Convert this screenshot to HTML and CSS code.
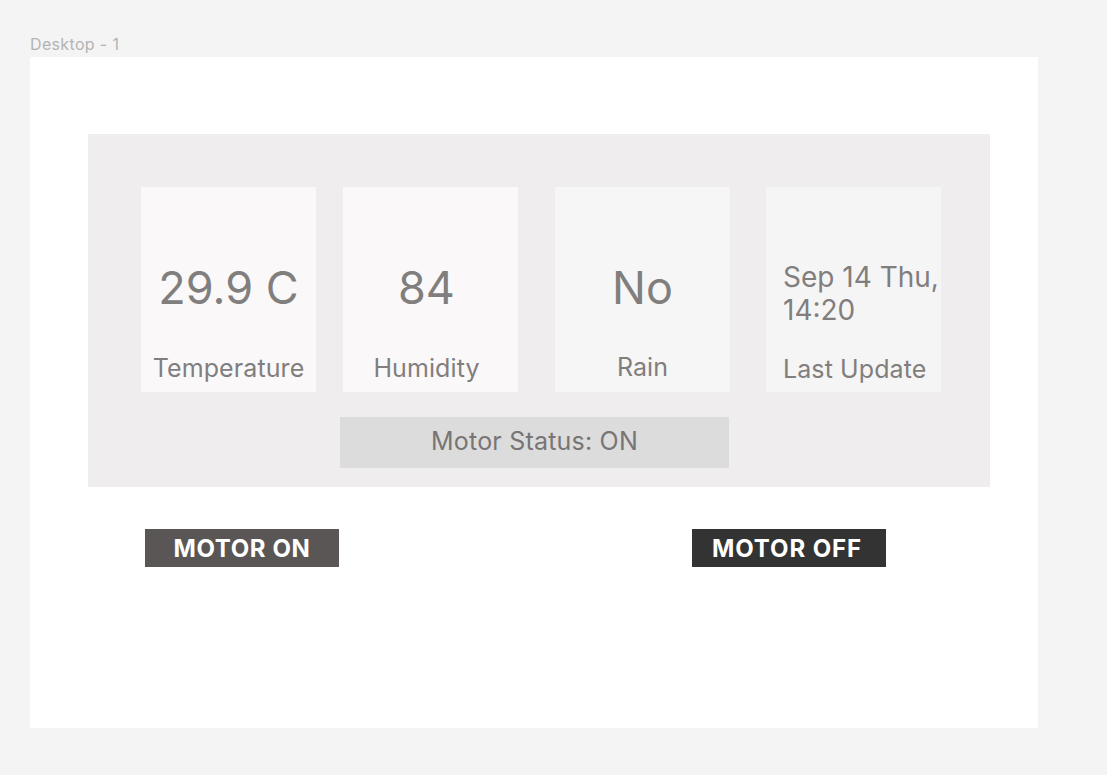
FILE: index.html
```html
<!DOCTYPE html>
<html>
<head>
<meta charset="utf-8">
<link rel="stylesheet" href="styles.css">
</head>
<body>
<div class="label">Desktop - 1</div>
<div class="frame">
  <div class="panel">
    <div class="cards">
      <div class="card c1">
        <div class="value">29.9 C</div>
        <div class="name">Temperature</div>
      </div>
      <div class="card c2">
        <div class="value">84</div>
        <div class="name">Humidity</div>
      </div>
      <div class="card c3">
        <div class="value">No</div>
        <div class="name">Rain</div>
      </div>
      <div class="card c4">
        <div class="value date">Sep 14 Thu,<br>14:20</div>
        <div class="name">Last Update</div>
      </div>
    </div>
    <div class="status">Motor Status: ON</div>
  </div>
  <div class="buttons">
    <button class="btn on">MOTOR ON</button>
    <button class="btn off">MOTOR OFF</button>
  </div>
</div>
</body>
</html>
```
FILE: styles.css
```css
html, body {
  margin: 0;
  padding: 0;
}
body {
  background: #f4f4f4;
  font-family: Inter, "Noto Sans", sans-serif;
  width: 1107px;
  height: 775px;
  overflow: hidden;
}
.label {
  padding: 35px 0 0 30px;
  box-sizing: border-box;
  height: 57px;
  font-size: 16px;
  line-height: 19px;
  letter-spacing: 0.35px;
  color: #b3b3b3;
}
.frame {
  margin-left: 30px;
  width: 1008px;
  height: 671px;
  background: #ffffff;
  padding-top: 77px;
  box-sizing: border-box;
}
.panel {
  margin-left: 58px;
  width: 902px;
  height: 353px;
  background: #efeded;
  padding-top: 53px;
  box-sizing: border-box;
}
.cards {
  display: flex;
  padding-left: 53px;
}
.card {
  width: 175px;
  height: 205px;
  background: #faf8f9;
  text-align: center;
  color: #817e7e;
  box-sizing: border-box;
}
.c2 { margin-left: 27px; }
.c2 .value, .c2 .name { padding-right: 8px; }
.c3 { margin-left: 37px; background: #f6f6f6; }
.c4 { margin-left: 36px; background: #f6f5f5; text-align: left; padding-left: 17px; }
.value {
  margin-top: 76px;
  font-size: 45px;
  line-height: 50px;
  height: 50px;
}
.date {
  margin-top: 74px;
  font-size: 28px;
  line-height: 33px;
  height: 66px;
}
.name {
  margin-top: 40px;
  font-size: 25px;
  line-height: 30px;
  letter-spacing: 0.1px;
}
.c3 .name { margin-top: 39px; }
.c4 .name { margin-top: 27px; }
.status {
  margin: 25px 0 0 252px;
  width: 389px;
  height: 51px;
  background: #dddcdc;
  color: #777575;
  font-size: 25px;
  line-height: 48px;
  letter-spacing: 0.2px;
  text-align: center;
}
.buttons {
  display: flex;
  margin-top: 42px;
  padding-left: 115px;
}
.btn {
  width: 194px;
  height: 38px;
  border: none;
  padding: 0;
  color: #ffffff;
  font-family: Inter, "Noto Sans", sans-serif;
  font-size: 24px;
  font-weight: 700;
  line-height: 40px;
  letter-spacing: 0.6px;
  text-align: center;
}
.on { background: #5a5655; }
.off { background: #333333; margin-left: 353px; padding-right: 4px; letter-spacing: 0.9px; }
```
